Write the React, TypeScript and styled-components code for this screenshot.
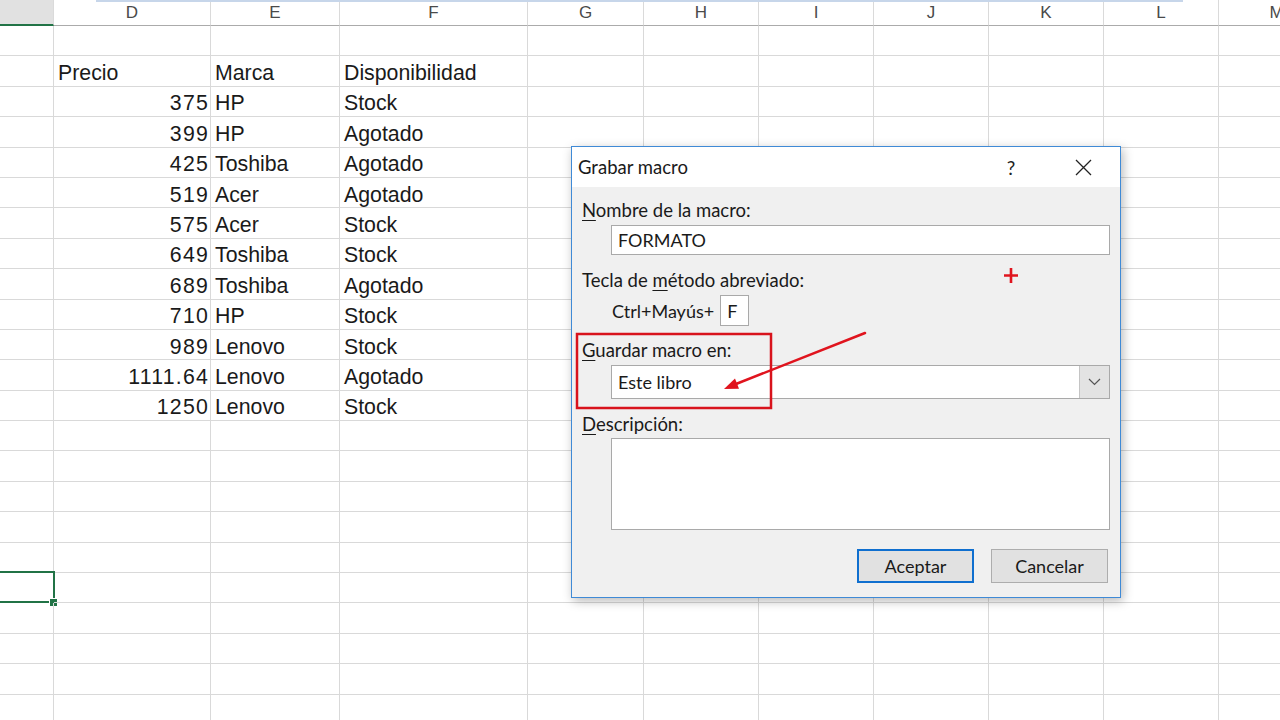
import React from "react";
import styled, { createGlobalStyle, css } from "styled-components";

const GlobalStyle = createGlobalStyle`
  html, body {
    margin: 0;
    padding: 0;
    background: #ffffff;
    overflow: hidden;
  }
`;

const colWidths = [54, 157, 129, 188, 116, 115, 115, 115, 115, 115, 116];
const colLabels = ["", "D", "E", "F", "G", "H", "I", "J", "K", "L", "M"];
const ROW_COUNT = 23;

type Product = { price: string; brand: string; stock: string };

const products: Product[] = [
  { price: "375", brand: "HP", stock: "Stock" },
  { price: "399", brand: "HP", stock: "Agotado" },
  { price: "425", brand: "Toshiba", stock: "Agotado" },
  { price: "519", brand: "Acer", stock: "Agotado" },
  { price: "575", brand: "Acer", stock: "Stock" },
  { price: "649", brand: "Toshiba", stock: "Stock" },
  { price: "689", brand: "Toshiba", stock: "Agotado" },
  { price: "710", brand: "HP", stock: "Stock" },
  { price: "989", brand: "Lenovo", stock: "Stock" },
  { price: "1111.64", brand: "Lenovo", stock: "Agotado" },
  { price: "1250", brand: "Lenovo", stock: "Stock" },
];

const Page = styled.div`
  position: relative;
  width: 1280px;
  height: 720px;
  overflow: hidden;
  font-family: "Liberation Sans", Arial, sans-serif;
`;

const Sheet = styled.div`
  display: grid;
  grid-template-columns: ${colWidths.map((w) => `${w}px`).join(" ")};
  grid-template-rows: 26px repeat(${ROW_COUNT}, 30.4px);
`;

const FormulaEdge = styled.div`
  position: absolute;
  top: 0;
  left: 96px;
  width: 1087px;
  height: 2px;
  background: #c7d6ea;
`;

const ColHeader = styled.div<{ $active?: boolean }>`
  display: flex;
  align-items: center;
  justify-content: center;
  box-sizing: border-box;
  font-size: 17px;
  color: #4a4a4a;
  border-right: 1px solid #dadada;
  border-bottom: 1px solid #ababab;
  background: #ffffff;
  ${(p) =>
    p.$active &&
    css`
      background: #e1e1e1;
      border-bottom: 2px solid #217346;
    `}
`;

const Cell = styled.div<{ $align?: "left" | "right"; $selected?: boolean }>`
  position: relative;
  display: flex;
  align-items: center;
  justify-content: ${(p) => (p.$align === "right" ? "flex-end" : "flex-start")};
  box-sizing: border-box;
  padding: 5px ${(p) => (p.$align === "right" ? "2px" : "0")} 0
    ${(p) => (p.$align === "right" ? "0" : "4px")};
  font-size: 21.3px;
  color: #1a1a1a;
  white-space: nowrap;
  border-right: 1px solid #d9d9d9;
  border-bottom: 1px solid #d9d9d9;
  ${(p) =>
    p.$selected &&
    css`
      &::before {
        content: "";
        position: absolute;
        left: -2px;
        top: -2px;
        right: -2px;
        bottom: -1px;
        border: 2px solid #217346;
      }
      &::after {
        content: "";
        position: absolute;
        right: -5px;
        bottom: -5px;
        width: 7px;
        height: 7px;
        background: #217346;
        border: 1px solid #ffffff;
      }
    `}
`;

// the sheet's digits are set a touch wider than the text
const PriceText = styled.span`
  letter-spacing: 1.2px;
  margin-right: -1px;
`;

/* ---------- dialog ---------- */

const Dialog = styled.div`
  position: absolute;
  left: 571px;
  top: 146px;
  width: 550px;
  height: 452px;
  box-sizing: border-box;
  border: 1px solid #3f8ad6;
  background: #f0f0f0;
  box-shadow: 2px 3px 10px rgba(0, 0, 0, 0.28);
  display: flex;
  flex-direction: column;
  font-family: Lato, "Open Sans", sans-serif;
  color: #1a1a1a;
`;

const TitleBar = styled.div`
  height: 40px;
  flex: none;
  display: flex;
  align-items: center;
  background: #ffffff;
  padding-left: 6px;
`;

const Title = styled.span`
  font-size: 18.5px;
  flex: 1;
`;

const TitleButton = styled.div<{ $gap: number }>`
  width: 46px;
  height: 40px;
  display: flex;
  align-items: center;
  justify-content: center;
  margin-right: ${(p) => p.$gap}px;
  font-size: 19px;
  color: #222;
`;

const Body = styled.div`
  display: flex;
  flex-direction: column;
  padding: 0 11px 0 10px;
`;

const Label = styled.div<{ $top: number }>`
  margin-top: ${(p) => p.$top}px;
  height: 22px;
  line-height: 22px;
  font-size: 18.5px;
  white-space: nowrap;
  u {
    text-decoration: underline;
    text-underline-offset: 3px;
  }
`;

const fieldBox = css`
  box-sizing: border-box;
  background: #ffffff;
  border: 1px solid #a9a9a9;
`;

const TextInput = styled.div<{ $top: number; $height: number }>`
  ${fieldBox};
  margin: ${(p) => p.$top}px 0 0 29px;
  width: 499px;
  height: ${(p) => p.$height}px;
  display: flex;
  align-items: center;
  padding-left: 6px;
  font-size: 18px;
`;

const ShortcutRow = styled.div`
  margin: 4px 0 0 30px;
  height: 31px;
  display: flex;
  align-items: center;
  gap: 6px;
  font-size: 18px;
`;

const KeyBox = styled.div`
  ${fieldBox};
  width: 29px;
  height: 31px;
  display: flex;
  align-items: center;
  padding-left: 6px;
  font-size: 18px;
`;

const Select = styled.div`
  ${fieldBox};
  margin: 4px 0 0 29px;
  width: 499px;
  height: 34px;
  display: flex;
  align-items: center;
  font-size: 18px;
`;

const SelectValue = styled.span`
  flex: 1;
  padding-left: 6px;
`;

const SelectArrow = styled.div`
  width: 29px;
  height: 100%;
  display: flex;
  align-items: center;
  justify-content: center;
  background: #e3e3e3;
  border-left: 1px solid #c4c4c4;
`;

const ButtonRow = styled.div`
  margin-top: 19px;
  display: flex;
  justify-content: flex-end;
  gap: 17px;
  padding-right: 1px;
`;

const Button = styled.div<{ $primary?: boolean }>`
  box-sizing: border-box;
  width: 117px;
  height: 34px;
  display: flex;
  align-items: center;
  justify-content: center;
  font-size: 18px;
  background: #e1e1e1;
  border: ${(p) => (p.$primary ? "2px solid #0f6fcf" : "1px solid #adadad")};
`;

const Marks = styled.svg`
  position: absolute;
  left: 0;
  top: 0;
  pointer-events: none;
`;

function Spreadsheet() {
  const cells: React.ReactNode[] = [];

  colLabels.forEach((label, c) => {
    cells.push(
      <ColHeader key={`h${c}`} $active={c === 0}>
        {label}
      </ColHeader>
    );
  });

  for (let r = 0; r < ROW_COUNT; r++) {
    for (let c = 0; c < colLabels.length; c++) {
      let content: React.ReactNode = null;
      let align: "left" | "right" = "left";
      if (r === 1) {
        content = ["", "Precio", "Marca", "Disponibilidad"][c] ?? "";
      } else if (r >= 2 && r - 2 < products.length) {
        const p = products[r - 2];
        if (c === 1) {
          content = <PriceText>{p.price}</PriceText>;
          align = "right";
        } else if (c === 2) content = p.brand;
        else if (c === 3) content = p.stock;
      }
      cells.push(
        <Cell key={`${r}-${c}`} $align={align} $selected={r === 18 && c === 0}>
          {content}
        </Cell>
      );
    }
  }

  return <Sheet>{cells}</Sheet>;
}

function RecordMacroDialog() {
  return (
    <Dialog>
      <TitleBar>
        <Title>Grabar macro</Title>
        <TitleButton $gap={26}>?</TitleButton>
        <TitleButton $gap={14}>
          <svg width="17" height="17" viewBox="0 0 17 17">
            <path d="M1 1 L16 16 M16 1 L1 16" stroke="#222" strokeWidth="1.3" fill="none" />
          </svg>
        </TitleButton>
      </TitleBar>
      <Body>
        <Label $top={12}>
          <u>N</u>ombre de la macro:
        </Label>
        <TextInput $top={4} $height={30}>FORMATO</TextInput>
        <Label $top={14}>
          Tecla de <u>m</u>étodo abreviado:
        </Label>
        <ShortcutRow>
          <span>Ctrl+Mayús+</span>
          <KeyBox>F</KeyBox>
        </ShortcutRow>
        <Label $top={13}>
          <u>G</u>uardar macro en:
        </Label>
        <Select>
          <SelectValue>Este libro</SelectValue>
          <SelectArrow>
            <svg width="13" height="8" viewBox="0 0 13 8">
              <path d="M1 1 L6.5 6.5 L12 1" stroke="#555" strokeWidth="1.2" fill="none" />
            </svg>
          </SelectArrow>
        </Select>
        <Label $top={14}>
          <u>D</u>escripción:
        </Label>
        <TextInput $top={3} $height={92} />
        <ButtonRow>
          <Button $primary>Aceptar</Button>
          <Button>Cancelar</Button>
        </ButtonRow>
      </Body>
    </Dialog>
  );
}

export default function App() {
  return (
    <Page>
      <GlobalStyle />
      <Spreadsheet />
      <FormulaEdge />
      <RecordMacroDialog />
      <Marks width="1280" height="720" viewBox="0 0 1280 720">
        {/* highlight box around the storage option */}
        <rect x="577" y="334" width="194" height="74" fill="none" stroke="#d8131c" strokeWidth="2.5" />
        {/* pointer arrow */}
        <line x1="865" y1="333" x2="736" y2="384" stroke="#e0141e" strokeWidth="2.5" strokeLinecap="round" />
        <polygon points="724,389 739,388.7 735,378.5" fill="#e0141e" />
        {/* cursor cross */}
        <path d="M1011 268 V283 M1004 275.5 H1018" stroke="#e0141e" strokeWidth="2.6" />
      </Marks>
    </Page>
  );
}
